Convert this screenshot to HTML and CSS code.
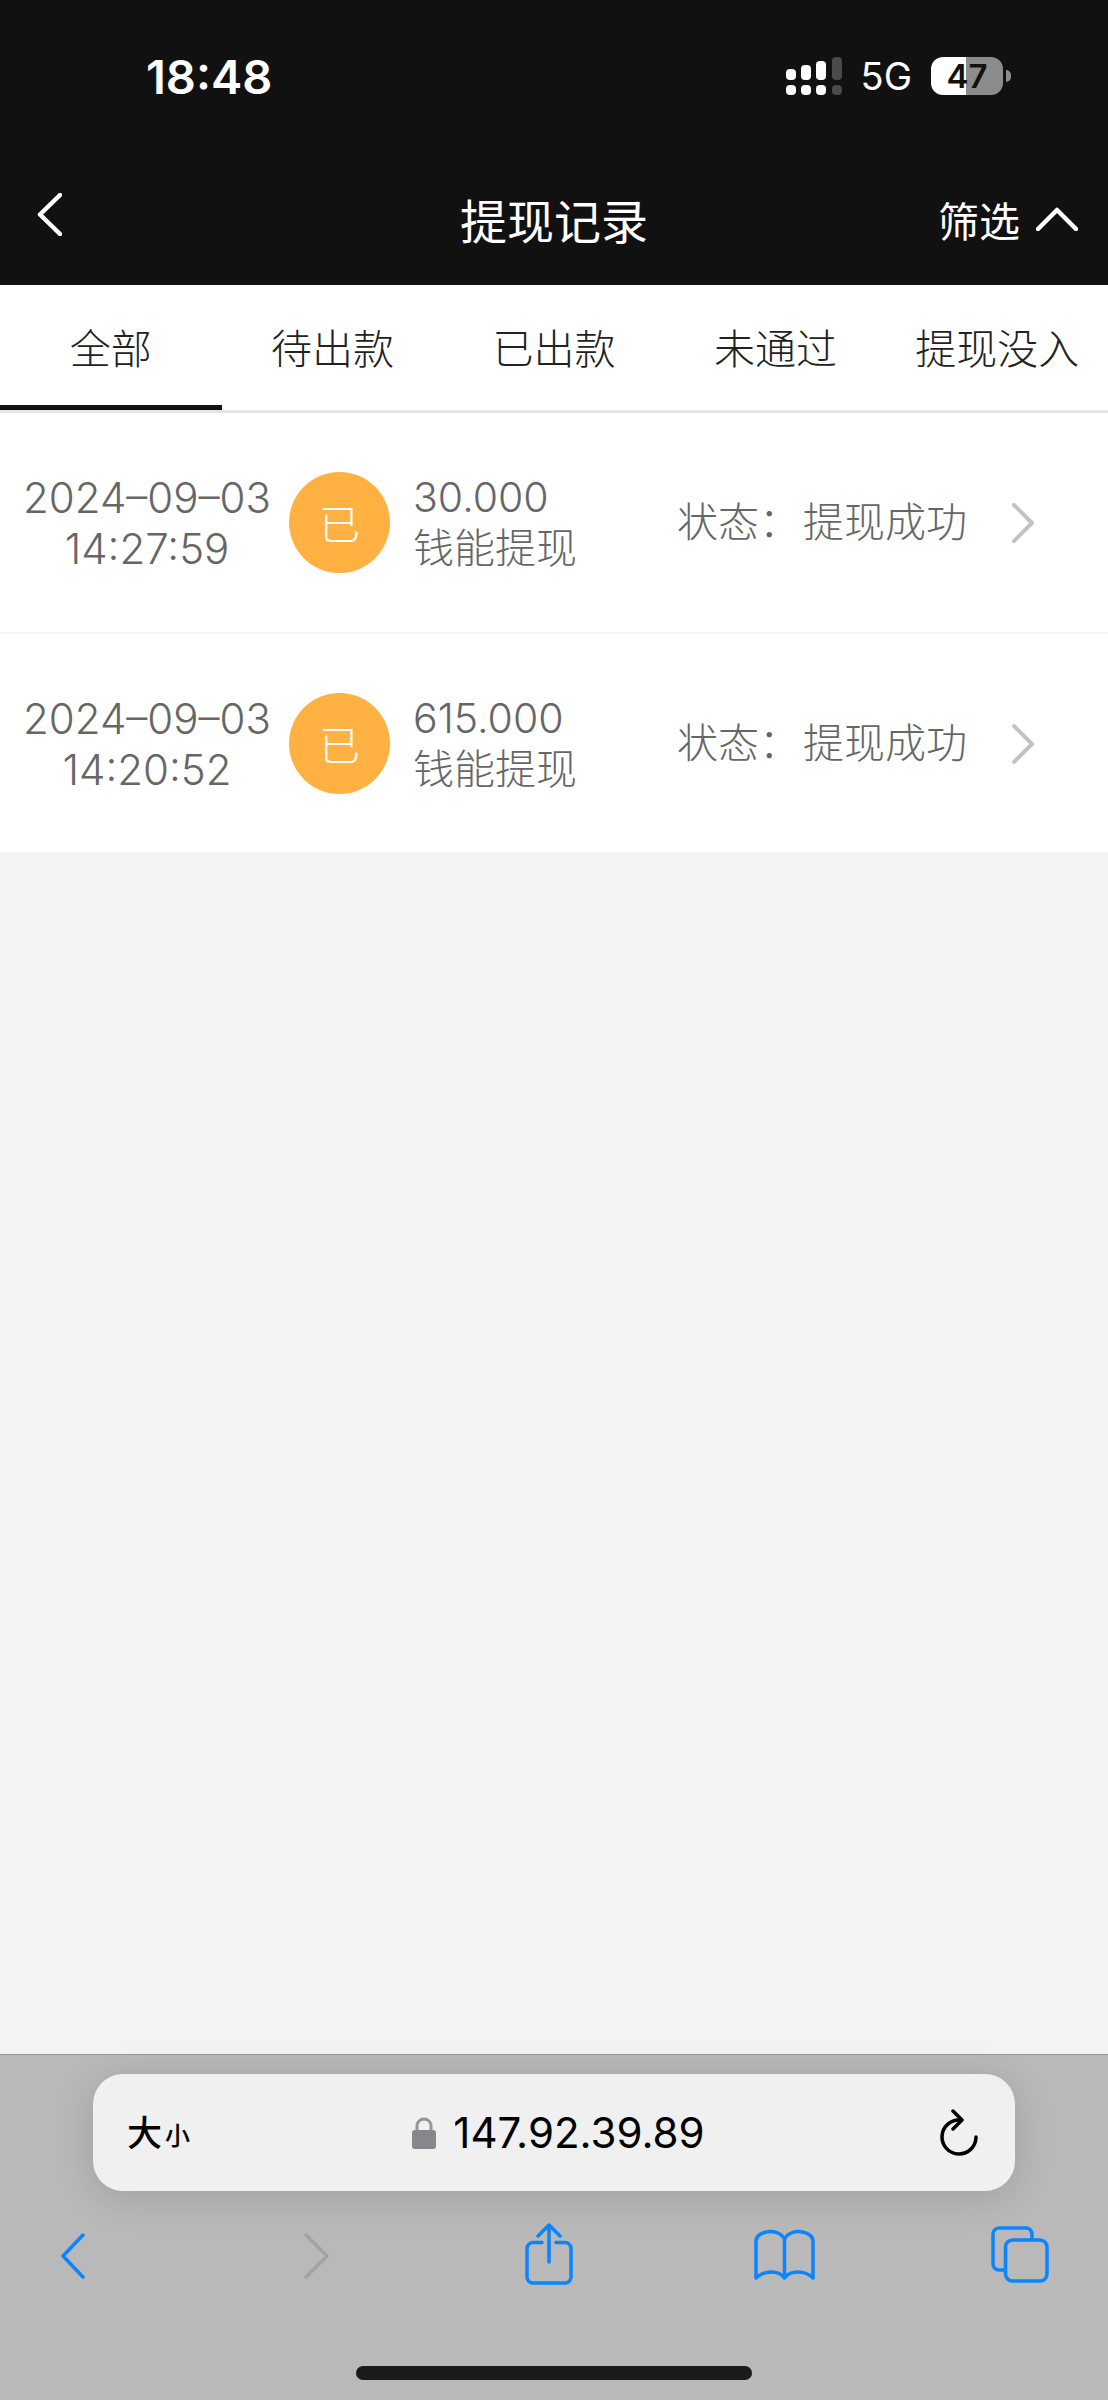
FILE: index.html
```html
<!DOCTYPE html>
<html lang="zh">
<head>
  <meta charset="UTF-8" />
  <meta name="viewport" content="width=device-width, initial-scale=1.0" />
  <title>提现记录</title>
  <link rel="stylesheet" href="styles.css">
</head>
<body>
<div class="page">

  <div class="status-bar">
    <span class="clock">18:48</span>
    <div class="status-right">
      <div class="signal">
        <div class="sig-col"><i class="bar h1"></i><i class="dot"></i></div>
        <div class="sig-col"><i class="bar h2"></i><i class="dot"></i></div>
        <div class="sig-col"><i class="bar h3"></i><i class="dot"></i></div>
        <div class="sig-col off"><i class="bar h4"></i><i class="dot"></i></div>
      </div>
      <span class="net">5G</span>
      <div class="battery">47</div>
      <i class="battery-nub"></i>
    </div>
  </div>

  <header class="nav-bar">
    <svg class="nav-back" width="25" height="43" viewBox="0 0 25 43"><path d="M23 2 L3 21.5 L23 41" /></svg>
    <h1>提现记录</h1>
    <div class="nav-filter">
      <span>筛选</span>
      <svg width="42" height="24" viewBox="0 0 42 24"><path d="M2 22 L21 3 L40 22" /></svg>
    </div>
  </header>

  <nav class="tabs">
    <a class="tab active">全部</a>
    <a class="tab">待出款</a>
    <a class="tab">已出款</a>
    <a class="tab">未通过</a>
    <a class="tab">提现没入</a>
  </nav>

  <main class="record-list">
    <div class="record">
      <div class="record-date">2024–09–03<br>14:27:59</div>
      <div class="record-badge">已</div>
      <div class="record-amount">30.000<br>钱能提现</div>
      <div class="record-status"><span>状态：</span><span>提现成功</span></div>
      <svg class="record-arrow" width="22" height="40" viewBox="0 0 22 40"><path d="M2 2 L20 20 L2 38" /></svg>
    </div>
    <div class="record">
      <div class="record-date">2024–09–03<br>14:20:52</div>
      <div class="record-badge">已</div>
      <div class="record-amount">615.000<br>钱能提现</div>
      <div class="record-status"><span>状态：</span><span>提现成功</span></div>
      <svg class="record-arrow" width="22" height="40" viewBox="0 0 22 40"><path d="M2 2 L20 20 L2 38" /></svg>
    </div>
  </main>

  <footer class="browser-bar">
    <div class="address">
      <div class="address-size"><span class="big">大</span><span class="small">小</span></div>
      <div class="address-url">
        <svg width="24" height="32" viewBox="0 0 24 32">
          <path class="lock-loop" d="M5 15 V9 a7 7 0 0 1 14 0 V15" />
          <rect class="lock-body" x="0" y="13" width="24" height="19" rx="3" />
        </svg>
        <span>147.92.39.89</span>
      </div>
      <svg class="address-reload" width="40" height="48" viewBox="0 0 40 48">
        <path d="M21 11 A17 17 0 1 0 37 28" />
        <path d="M14 2 L23 11 L14 20" />
      </svg>
    </div>
    <div class="tools">
      <svg class="tool-back" width="25" height="46" viewBox="0 0 25 46"><path d="M23 2 L3 23 L23 44" /></svg>
      <svg class="tool-next" width="27" height="46" viewBox="0 0 27 46"><path d="M3 2 L24 23 L3 44" /></svg>
      <svg class="tool-share" width="48" height="62" viewBox="0 0 48 62">
        <path d="M17 19.5 H8 a6 6 0 0 0 -6 6 V54 a6 6 0 0 0 6 6 H40 a6 6 0 0 0 6 -6 V25.5 a6 6 0 0 0 -6 -6 H31" />
        <path d="M24 39 V2 M13 13 L24 2 L35 13" />
      </svg>
      <svg class="tool-book" width="61" height="51" viewBox="0 0 61 51">
        <path d="M30.5 49 C25 41 10 41 2 49 V12 C2 2 24 -2 30.5 10 V49 C36 41 51 41 59 49 V12 C59 2 37 -2 30.5 10" />
      </svg>
      <svg class="tool-pages" width="58" height="57" viewBox="0 0 58 57">
        <path d="M41 13 V8 a6 6 0 0 0 -6 -6 H8 a6 6 0 0 0 -6 6 V38 a6 6 0 0 0 6 6 H14" />
        <rect x="14.5" y="14" width="41.5" height="41" rx="7" />
      </svg>
    </div>
    <div class="home-indicator"></div>
  </footer>

</div>
</body>
</html>
```

FILE: styles.css
```css
/* Global */
* {
  box-sizing: border-box;
}
html, body {
  margin: 0;
  padding: 0;
}
body {
  font-family: Inter, "Noto Sans CJK SC", sans-serif;
  background-color: #f3f3f3;
  color: #666;
}
svg {
  display: block;
  flex: none;
  fill: none;
}
.page {
  display: flex;
  flex-direction: column;
  width: 1108px;
  height: 2400px;
  overflow: hidden;
}

/* Status bar */
.status-bar {
  display: flex;
  justify-content: space-between;
  align-items: center;
  height: 152px;
  padding: 0 97px 0 146px;
  background-color: #111;
  color: #fff;
}
.clock {
  font-size: 47px;
  font-weight: 600;
}
.status-right {
  display: flex;
  align-items: center;
}
.signal {
  display: flex;
  gap: 5.33px;
  margin-right: 19px;
}
.sig-col {
  display: flex;
  flex-direction: column;
  justify-content: flex-end;
  gap: 5px;
  width: 10px;
  height: 38px;
}
.sig-col i {
  display: block;
  background-color: #fff;
  border-radius: 4px;
}
.sig-col.off i {
  background-color: #4a4a4a;
}
.sig-col .dot { height: 10px; }
.sig-col .h1 { height: 11px; }
.sig-col .h2 { height: 15px; }
.sig-col .h3 { height: 19px; }
.sig-col .h4 { height: 23px; }
.net {
  font-size: 38px;
  margin-right: 19px;
}
.battery {
  width: 72px;
  height: 38px;
  border-radius: 12px;
  background: linear-gradient(to right, #fff 35px, #8c8c8c 35px);
  color: #111;
  font-size: 33px;
  font-weight: 600;
  line-height: 38px;
  text-align: center;
}
.battery-nub {
  display: block;
  width: 5px;
  height: 12px;
  margin-left: 3px;
  background-color: #8c8c8c;
  border-radius: 0 6px 6px 0;
}

/* Title bar */
.nav-bar {
  display: grid;
  grid-template-columns: 1fr auto 1fr;
  align-items: center;
  height: 133px;
  padding: 0 30px;
  background-color: #111;
  color: #fff;
}
.nav-bar h1 {
  margin: 0;
  font-size: 47px;
  font-weight: 400;
}
.nav-bar path {
  stroke: #fff;
  stroke-width: 4.5;
  stroke-linecap: round;
  stroke-linejoin: round;
}
.nav-back {
  margin: -9px 0 0 7px;
}
.nav-filter {
  display: flex;
  align-items: center;
  justify-content: flex-end;
  gap: 16px;
  font-size: 41px;
}

/* Tabs */
.tabs {
  display: flex;
  height: 128px;
  background-color: #fff;
  border-bottom: 3px solid #e5e5e5;
}
.tab {
  flex: 1;
  display: flex;
  align-items: center;
  justify-content: center;
  padding-top: 2px;
  border-bottom: 5px solid transparent;
  color: #222;
  font-size: 41px;
  font-weight: 300;
}
.tab.active {
  border-bottom-color: #111;
}

/* Record rows */
.record-list {
  flex: 1;
}
.record {
  display: flex;
  align-items: center;
  height: 221px;
  background-color: #fff;
  border-bottom: 2px solid #f4f4f4;
  font-size: 41px;
  font-weight: 300;
  line-height: 51px;
}
.record:last-child {
  height: 218px;
  padding-top: 1px;
  border-bottom: none;
}
.record-date {
  width: 289px;
  padding-left: 5px;
  text-align: center;
  font-size: 42px;
}
.record-badge {
  width: 101px;
  height: 101px;
  margin-right: 23px;
  padding-top: 3px;
  border-radius: 50%;
  background-color: #ffb142;
  color: #fff;
  font-size: 41px;
  line-height: 101px;
  text-align: center;
}
.record-amount {
  width: 264px;
}
.record-status {
  display: flex;
  gap: 3px;
}
.record-arrow {
  margin-left: 45px;
}
.record-arrow path {
  stroke: #c2c2c2;
  stroke-width: 4;
  stroke-linecap: round;
  stroke-linejoin: round;
}

/* Browser toolbar */
.browser-bar {
  display: flex;
  flex-direction: column;
  height: 346px;
  padding-top: 19px;
  background-color: #b9b9b9;
  border-top: 1px solid #999;
}
.address {
  display: flex;
  align-items: center;
  justify-content: space-between;
  width: 922px;
  height: 117px;
  margin-left: 93px;
  padding: 0 36px 0 34px;
  border-radius: 30px;
  background-color: #f0f0f0;
  box-shadow: 0 6px 40px rgba(0,0,0,0.14);
  color: #000;
}
.address-size {
  display: flex;
  align-items: flex-end;
  gap: 3px;
  width: 283px;
  font-weight: 500;
}
.address-size .big {
  font-size: 35px;
  line-height: 40px;
}
.address-size .small {
  font-size: 25px;
  line-height: 34px;
}
.address-url {
  display: flex;
  align-items: center;
  gap: 17px;
  font-size: 42px;
}
.address-url .lock-loop {
  stroke: #97979b;
  stroke-width: 3;
}
.address-url .lock-body {
  fill: #87868c;
}
.address-reload {
  margin-left: 232px;
}
.address-reload path {
  stroke: #000;
  stroke-width: 3.5;
  stroke-linecap: round;
  stroke-linejoin: round;
}
.tools {
  display: flex;
  align-items: center;
  height: 62px;
  margin-top: 32px;
  padding-left: 60px;
}
.tools path,
.tools rect {
  stroke: #0a84ff;
  stroke-width: 3.5;
  stroke-linecap: round;
  stroke-linejoin: round;
}
.tools .tool-next path {
  stroke: #a3a3a3;
}
.tool-back, .tool-next { margin-top: 4px; }
.tool-next { margin-left: 218px; }
.tool-share { margin-left: 195px; }
.tool-book { margin-left: 181px; }
.tool-pages { margin-left: 176px; }
.home-indicator {
  width: 396px;
  height: 14px;
  margin: 81px 0 0 356px;
  border-radius: 7px;
  background-color: #1a1a1a;
}
```
